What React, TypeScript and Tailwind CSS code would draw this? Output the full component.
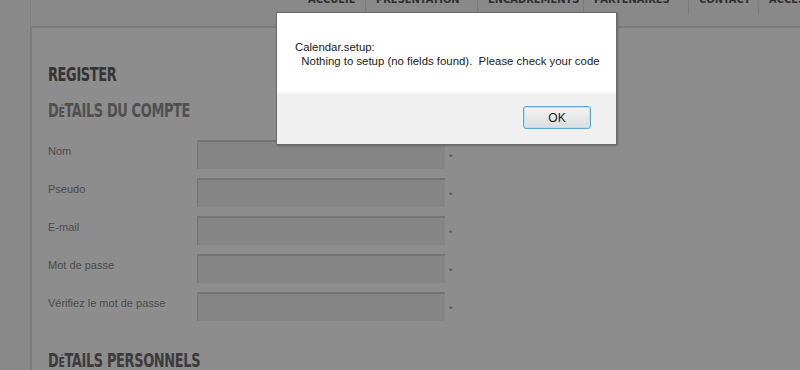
import React from 'react'

const NAV = [
  { label: 'ACCUEIL', w: 'w-[67px]' },
  { label: 'PRÉSENTATION', w: 'w-[112px]' },
  { label: 'ENCADREMENTS', w: 'w-[106px]' },
  { label: 'PARTENAIRES', w: 'w-[105px]' },
  { label: 'CONTACT', w: 'w-[70px]' },
  { label: 'ACCES', w: 'w-[42px]' },
]

const FIELDS = ['Nom', 'Pseudo', 'E-mail', 'Mot de passe', 'Vérifiez le mot de passe']

const condensed = { fontFamily: '"DejaVu Sans Condensed", "DejaVu Sans", sans-serif' }

function Heading({ rest, className }: { rest: string; className: string }) {
  return (
    <h2
      className={`origin-left scale-x-[0.72] whitespace-nowrap font-bold tracking-[-0.5px] ${className}`}
      style={condensed}
    >
      D<span className="text-[0.72em]">É</span>
      {rest}
    </h2>
  )
}

function FormRow({ label }: { label: string }) {
  return (
    <div className="flex items-start">
      <label className="w-[149px] pt-[4px] text-[11px] leading-[14px] text-[#4b4b4b]">{label}</label>
      <div className="h-[29px] w-[248px] border-t-2 border-l border-[#747474] bg-[#858585]" />
      <span className="ml-[4px] pt-[13px] text-[9px] leading-[9px] text-[#4b4b4b]">*</span>
    </div>
  )
}

export default function App() {
  return (
    <div
      className="relative h-[370px] w-[800px] overflow-hidden bg-[#898989]"
      style={{ fontFamily: '"Liberation Sans", Arial, sans-serif' }}
    >
      {/* top nav, mostly scrolled out of view */}
      <div className="ml-[30px] flex h-[26px] justify-end border-l border-[#7f7f7f]">
        <nav className="flex h-[15px]">
          {NAV.map((item, i) => (
            <div
              key={item.label}
              className={`flex h-full shrink-0 items-start overflow-hidden pl-[10px] ${item.w} ${i > 0 ? 'border-l border-[#7a7a7a]' : ''}`}
            >
              <span
                className="-mt-[6px] whitespace-nowrap text-[11px] font-bold leading-[11px] tracking-[0px] text-[#2e2e2e]"
                style={condensed}
              >
                {item.label}
              </span>
            </div>
          ))}
        </nav>
      </div>

      {/* content panel */}
      <div className="ml-[30px] border-l-2 border-t-2 border-[#7b7b7b] bg-[#8d8d8d] pl-[16px] pt-[36px]">
        <h1
          className="origin-left scale-x-[0.72] text-[20px] font-bold leading-[20px] tracking-[-0.5px] text-[#353535]"
          style={condensed}
        >
          REGISTER
        </h1>
        <Heading rest="TAILS DU COMPTE" className="mt-[16px] text-[20px] leading-[20px] text-[#505050]" />

        <div className="mt-[18px] flex flex-col gap-[9px]">
          {FIELDS.map(f => (
            <FormRow key={f} label={f} />
          ))}
        </div>

        <Heading rest="TAILS PERSONNELS" className="mt-[29px] text-[20px] leading-[20px] text-[#3c3c3c]" />
        <div className="h-[40px]" />
      </div>

      {/* alert dialog */}
      <div className="absolute left-[276px] top-[12px] w-[341px] border border-[#6a6a6a] shadow-[1px_1px_2px_rgba(0,0,0,0.25)]">
        <div className="h-[80px] bg-white pl-[18px] pt-[27px] text-[11.4px] leading-[14px] text-[#1a1a1a]">
          <p>Calendar.setup:</p>
          <p className="whitespace-pre">{'  Nothing to setup (no fields found).  Please check your code'}</p>
        </div>
        <div className="flex h-[51px] items-start justify-end bg-[#f0f0f0] pr-[25px] pt-[13px]">
          <button className="h-[23px] w-[68px] rounded-[3px] border border-[#5aa9d6] bg-gradient-to-b from-[#f4f4f4] to-[#dcdcdc] text-[12px] text-[#1a1a1a] shadow-[inset_0_0_0_1px_#b5e0f7]">
            OK
          </button>
        </div>
      </div>
    </div>
  )
}
